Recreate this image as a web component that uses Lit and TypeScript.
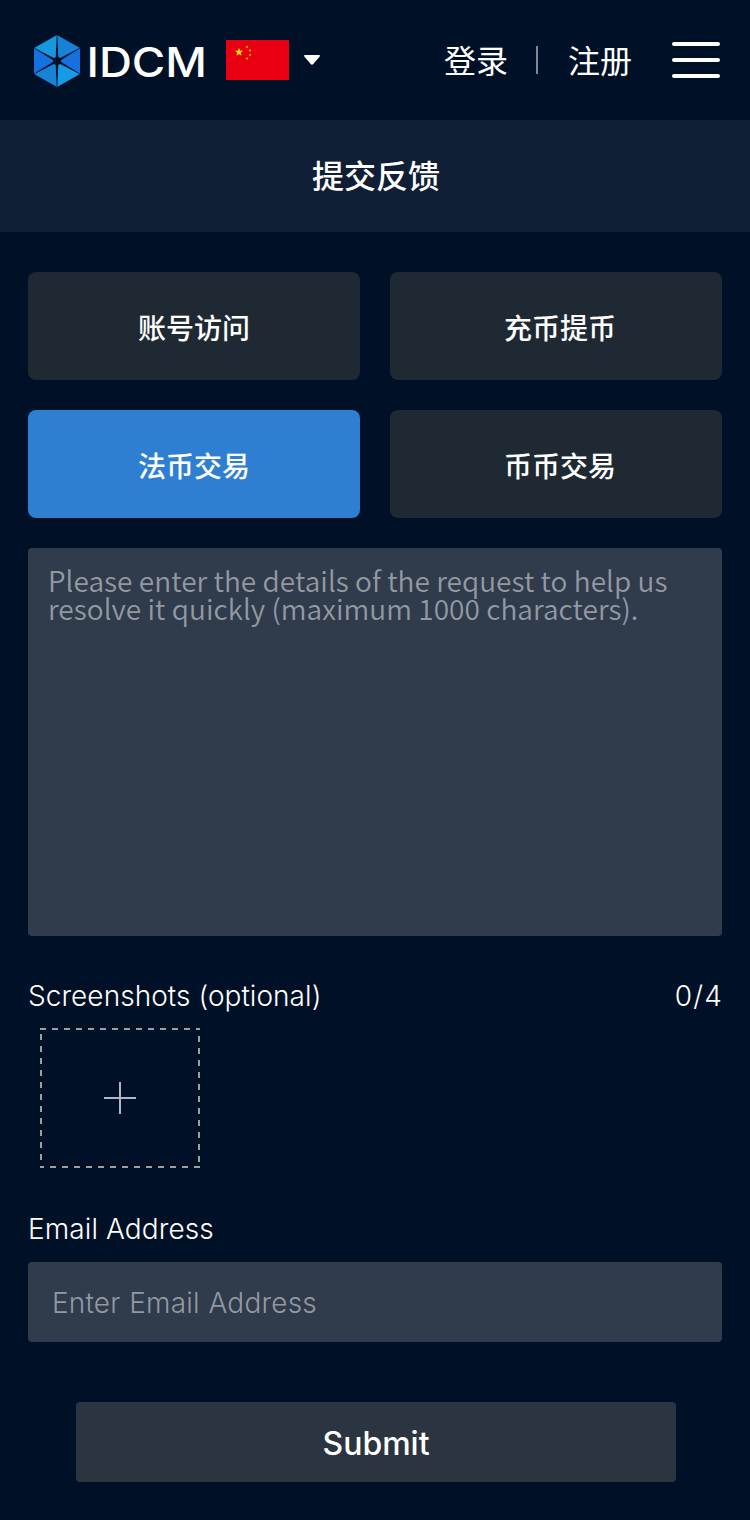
import { LitElement, html, css, svg } from "lit";
import { customElement, state } from "lit/decorators.js";
import { classMap } from "lit/directives/class-map.js";

const STAR = "M0-1 .2245-.309 .9511-.309 .3633.118 .5878.809 0 .382-.5878.809-.3633.118-.9511-.309-.2245-.309Z";

@customElement("app-root")
export class AppRoot extends LitElement {
  @state() selected = 2;

  categories = ["账号访问", "充币提币", "法币交易", "币币交易"];

  static styles = css`
    :host {
      display: block;
      min-height: 1520px;
      background: #001026;
      color: #fff;
      font-family: "Inter", "Noto Sans CJK SC", sans-serif;
    }
    * { box-sizing: border-box; }
    svg { display: block; flex: none; }
    header {
      height: 120px;
      padding: 0 30px 0 32px;
      display: flex;
      align-items: center;
    }
    .brand { width: 180px; height: 64px; overflow: visible; }
    .wordmark { font: 500 41px "Inter", sans-serif; fill: #fff; }
    .flag { margin-left: 14px; }
    .caret { margin-left: 14px; }
    nav {
      margin-left: auto;
      display: flex;
      align-items: center;
      font: 400 32px/48px "Noto Sans CJK SC", sans-serif;
    }
    nav span:not(.sep) { padding-bottom: 3px; }
    .sep { width: 2px; height: 28px; margin: 0 30px 0 28px; background: #808792; }
    .menu {
      margin-left: 40px;
      width: 48px;
      height: 36px;
      display: flex;
      flex-direction: column;
      justify-content: space-between;
    }
    .menu i { height: 4px; border-radius: 2px; background: #fff; }
    h1 {
      margin: 0;
      height: 112px;
      padding-left: 2px;
      background: #111f36;
      text-align: center;
      font: 500 32px/108px "Noto Sans CJK SC", sans-serif;
    }
    main { padding: 40px 28px 38px; }
    .grid {
      display: grid;
      grid-template-columns: 1fr 1fr;
      grid-auto-rows: 108px;
      gap: 30px;
    }
    button {
      border: 0;
      padding: 0;
      color: #fff;
      font: 500 28px/40px "Noto Sans CJK SC", sans-serif;
      border-radius: 8px;
      background: #1f2933;
    }
    .grid button { padding-top: 2px; }
    .grid button:nth-child(even) { padding-left: 8px; }
    button.active { background: #2e7fd1; }
    textarea, input {
      display: block;
      width: 100%;
      border: 0;
      outline: 0;
      resize: none;
      border-radius: 4px;
      background: #303b4c;
      color: #fff;
    }
    textarea {
      height: 388px;
      margin-top: 30px;
      padding: 18px 20px;
      font: 350 28px/28px "Noto Sans CJK SC", sans-serif;
      letter-spacing: 0.045px;
    }
    input {
      height: 80px;
      padding: 1px 24px 0;
      font: 300 28px "Inter", sans-serif;
      letter-spacing: 0.2px;
      word-spacing: 0.6px;
    }
    ::placeholder { color: #9299a1; opacity: 1; }
    .label {
      display: flex;
      justify-content: space-between;
      font-weight: 300;
      font-size: 28px;
      line-height: 40px;
      letter-spacing: 0.05px;
    }
    .count { letter-spacing: 1.2px; margin-right: -1px; }
    .shots { margin-top: 40px; }
    .upload { margin: 12px 0 0 12px; }
    .mail { margin: 41px 0 13px; letter-spacing: 0.1px; }
    button.submit {
      display: block;
      width: 600px;
      height: 80px;
      margin: 60px 0 0 48px;
      padding-top: 2px;
      border-radius: 4px;
      background: #2b3541;
      font: 500 32px "Inter", sans-serif;
    }
  `;

  render() {
    return html`
      <header>
        <svg class="brand" viewBox="0 -4 180 64">
          <path fill="#1697e0" d="M25 3V29L2 16Z" />
          <path fill="#1783d8" d="M25 3V29L48 16Z" />
          <path fill="#1471df" d="M2 16 25 29 2 42ZM48 16 25 29 48 42Z" />
          <path fill="#1783d8" d="M2 42 25 29V55Z" />
          <path fill="#169be4" d="M48 42 25 29V55Z" />
          <g fill="#001026">
            <path d="M24.7 3H25.3L26.2 24V34L25.3 55H24.7L23.8 34V24Z" />
            <path d="M2 15.8 21.3 25.7 30 30.6 48 41.8V42.2L28.7 32.3 20 27.4 2 16.2Z" />
            <path d="M48 15.8 28.7 25.7 20 30.6 2 41.8V42.2L21.3 32.3 30 27.4 48 16.2Z" />
            <circle cx="25" cy="29" r="4" />
          </g>
          <text class="wordmark" x="54.5" y="45" textLength="120.5" lengthAdjust="spacingAndGlyphs">IDCM</text>
        </svg>
        <svg class="flag" width="63" height="40">
          <rect width="63" height="40" fill="#e80012" />
          <g fill="#fff100">
            <path d=${STAR} transform="translate(13 12.2) scale(4.4)" />
            ${[[21, 7], [24, 10.5], [24, 15], [21, 18.5]].map(
              ([x, y]) => svg`<path d=${STAR} transform="translate(${x} ${y}) rotate(20) scale(1.6)" />`
            )}
          </g>
        </svg>
        <svg class="caret" width="18" height="12" viewBox="0 0 18 12">
          <path fill="#fff" d="M2 1H16Q18 1 16.5 2.8L10.3 10Q9 11.5 7.7 10L1.5 2.8Q0 1 2 1Z" />
        </svg>
        <nav>
          <span>登录</span><span class="sep"></span><span>注册</span>
          <div class="menu"><i></i><i></i><i></i></div>
        </nav>
      </header>
      <h1>提交反馈</h1>
      <main>
        <div class="grid">
          ${this.categories.map(
            (c, i) => html`<button class=${classMap({ active: i === this.selected })} @click=${() => (this.selected = i)}>${c}</button>`
          )}
        </div>
        <textarea placeholder="Please enter the details of the request to help us resolve it quickly (maximum 1000 characters)."></textarea>
        <div class="label shots"><span>Screenshots (optional)</span><span class="count">0/4</span></div>
        <svg class="upload" width="160" height="140" fill="none" stroke-width="2">
          <g stroke="#a09f9c" stroke-dasharray="6 6">
            <path d="M0 1H160" />
            <path d="M159 8V138" />
            <path d="M160 139H0" />
            <path d="M1 6V138" />
          </g>
          <path stroke="#b5b5c3" d="M64 70H96M80 54V86" />
        </svg>
        <div class="label mail">Email Address</div>
        <input placeholder="Enter Email Address" />
        <button class="submit">Submit</button>
      </main>
    `;
  }
}
